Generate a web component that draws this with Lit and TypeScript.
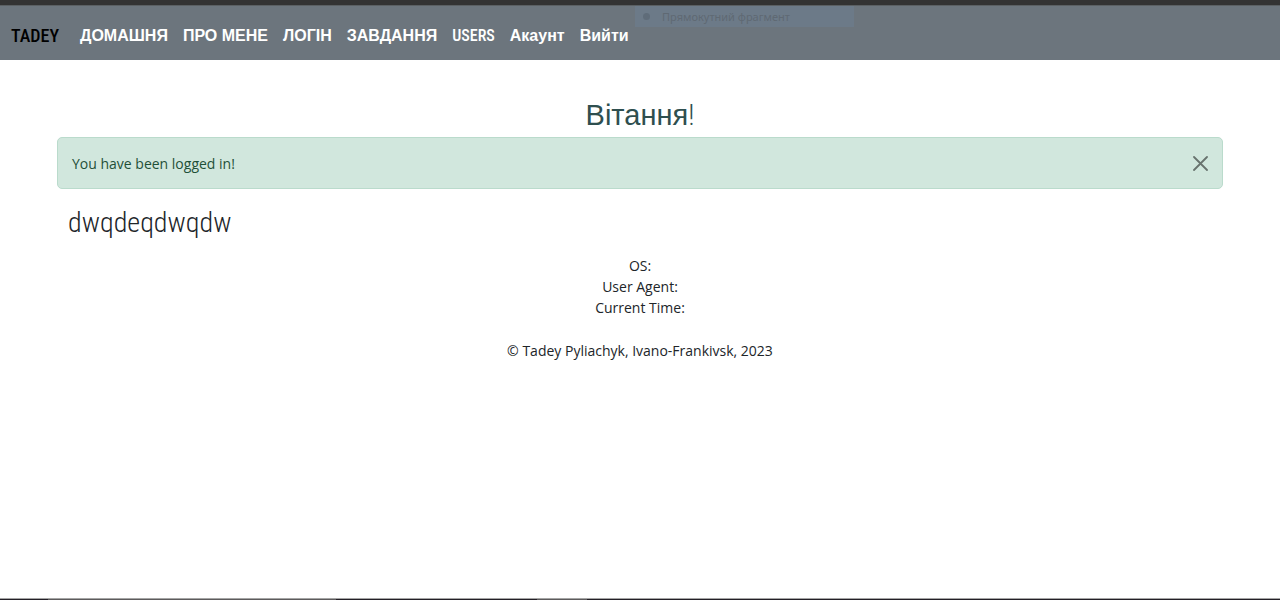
import { LitElement, html, css } from "lit";
import { customElement, state } from "lit/decorators.js";

interface NavItem {
  label: string;
  narrow?: boolean;
}

@customElement("app-root")
export class AppRoot extends LitElement {
  @state() private alertOpen = true;

  private navItems: NavItem[] = [
    { label: "ДОМАШНЯ" },
    { label: "ПРО МЕНЕ" },
    { label: "ЛОГІН" },
    { label: "ЗАВДАННЯ" },
    { label: "USERS", narrow: true },
    { label: "Акаунт" },
    { label: "Вийти" },
  ];

  static styles = css`
    :host {
      display: flex;
      flex-direction: column;
      min-height: 100vh;
      background: #fff;
      color: #212529;
      font: 14px/21px "Open Sans", "Noto Sans", sans-serif;
    }
    * {
      box-sizing: border-box;
    }
    .window-edge {
      height: 5px;
      background: #333;
      flex: none;
    }
    .navbar {
      position: relative;
      display: flex;
      align-items: center;
      gap: 21px;
      min-height: 55px;
      padding: 5px 11px 0;
      background: #6c757d;
      border-top: 1px solid #5b6063;
      font: bold 16px/24px "Liberation Sans", Arial, sans-serif;
    }
    .navbar a {
      color: #fff;
      text-decoration: none;
      white-space: nowrap;
    }
    .navbar .brand {
      color: #000;
      font: 500 18px/24px "Roboto Condensed", Roboto, sans-serif;
    }
    .links {
      display: flex;
      gap: 15px;
      margin: 0;
      padding: 0;
      list-style: none;
    }
    .links .narrow {
      font-family: "Roboto Condensed", Roboto, sans-serif;
      font-weight: 500;
    }
    .snip {
      position: absolute;
      top: 0;
      left: 635px;
      display: flex;
      align-items: center;
      gap: 12px;
      width: 219px;
      height: 21px;
      padding-left: 8px;
      background: #6c7a88;
      color: #5f6973;
      font: 11px/23px "Noto Sans", sans-serif;
    }
    .dot {
      width: 7px;
      height: 7px;
      border-radius: 50%;
      background: #5f6c79;
    }
    main {
      padding: 38px 57px 0;
    }
    h1,
    h2 {
      margin: 0;
      font-weight: 400;
      font-size: 28px;
      line-height: 34px;
    }
    h1 {
      text-align: center;
      color: #2f4f4f;
      font-family: "Liberation Sans", Arial, sans-serif;
      font-size: 29px;
    }
    h1 span,
    h2 {
      font-family: "Roboto Condensed", Roboto, sans-serif;
      font-weight: 300;
    }
    .alert {
      display: flex;
      align-items: center;
      justify-content: space-between;
      min-height: 52px;
      margin-top: 5px;
      padding: 0 14px;
      border: 1px solid #badbcc;
      border-radius: 5px;
      background: #d1e7dd;
      color: #1f5038;
    }
    .close {
      display: flex;
      padding: 0;
      border: 0;
      background: none;
      color: #68736e;
      cursor: pointer;
    }
    h2 {
      padding: 0 11px;
      margin-top: 17px;
    }
    footer {
      margin-top: 15px;
      text-align: center;
    }
    footer p {
      margin: 0 0 22px;
    }
    .taskbar {
      display: grid;
      grid-template-columns: 48px 288px 201px 50px 1fr;
      height: 2px;
      margin-top: auto;
      background: #231f26;
      border-top: 1px solid #a5a5a5;
    }
    .lit {
      background: #5d5b5c;
    }
  `;

  render() {
    return html`
      <div class="window-edge"></div>
      <nav class="navbar">
        <a class="brand" href="#">TADEY</a>
        <ul class="links">
          ${this.navItems.map(
            (item) => html`<li><a class=${item.narrow ? "narrow" : ""} href="#">${item.label}</a></li>`
          )}
        </ul>
        <div class="snip"><span class="dot"></span>Прямокутний фрагмент</div>
      </nav>
      <main>
        <h1>Вітання<span>!</span></h1>
        ${this.alertOpen
          ? html`<div class="alert" role="alert">
              <span>You have been logged in!</span>
              <button class="close" aria-label="Close" @click=${() => (this.alertOpen = false)}>
                <svg width="15" height="15" viewBox="0 0 15 15" fill="none" stroke="currentColor" stroke-width="1.8" stroke-linecap="round">
                  <path d="M1 1l13 13M14 1L1 14" />
                </svg>
              </button>
            </div>`
          : null}
        <h2>dwqdeqdwqdw</h2>
      </main>
      <footer>
        <p>OS:<br />User Agent:<br />Current Time:</p>
        <p>© Tadey Pyliachyk, Ivano-Frankivsk, 2023</p>
      </footer>
      <div class="taskbar"><i></i><i class="lit"></i><i></i><i class="lit"></i><i></i></div>
    `;
  }
}
